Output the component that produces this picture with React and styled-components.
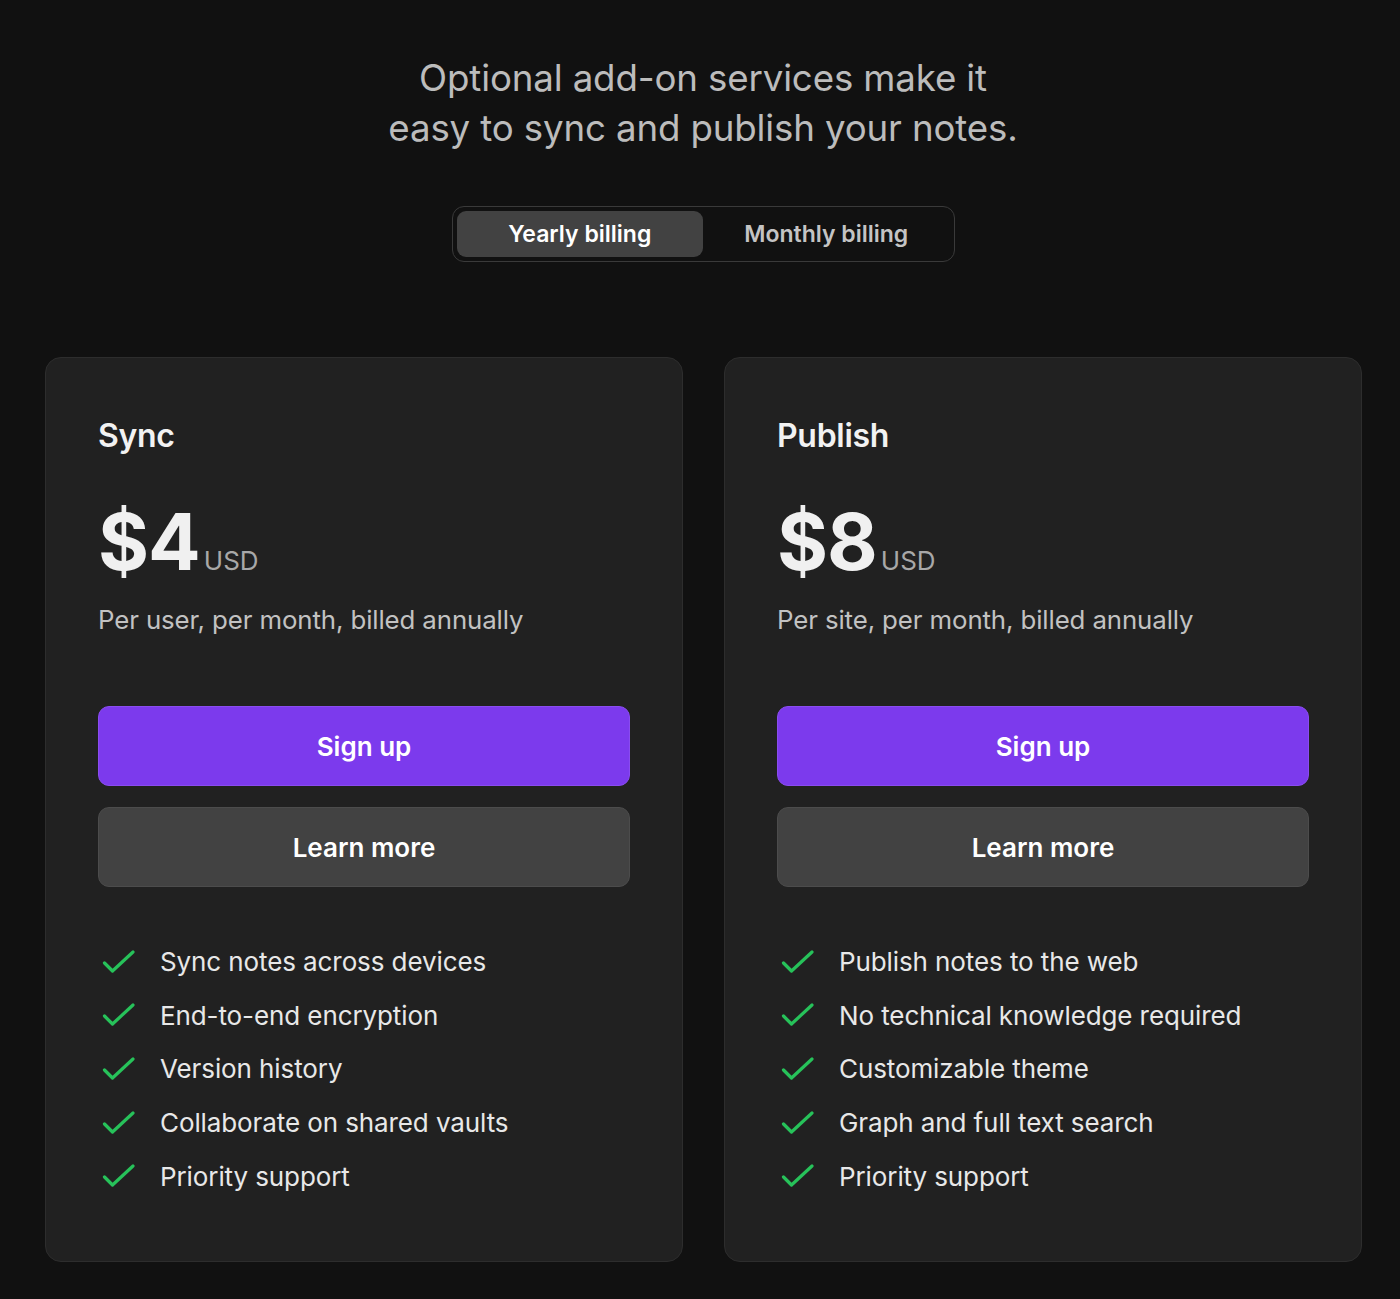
import React, { useState } from 'react';
import styled, { createGlobalStyle } from 'styled-components';

const GlobalStyle = createGlobalStyle`
  html, body {
    margin: 0;
    padding: 0;
    background: #111111;
  }
  body {
    font-family: Inter, 'Noto Sans', 'Liberation Sans', sans-serif;
    -webkit-font-smoothing: antialiased;
  }
`;

// --- Styled Components ---

const Page = styled.div`
  min-height: 1299px;
  background: #111111;
  padding: 53px 39px 37px 45px;
  box-sizing: border-box;
  display: flex;
  flex-direction: column;
  align-items: center;
`;

const Headline = styled.h1`
  margin: 0;
  font-size: 36.7px;
  line-height: 50px;
  font-weight: 400;
  color: #bcbcbc;
  text-align: center;
  letter-spacing: -0.15px;
`;

const Toggle = styled.div`
  margin-top: 53px;
  display: flex;
  padding: 4px;
  border: 1.5px solid #3a3a3a;
  border-radius: 12px;
  width: 503px;
  height: 56px;
  box-sizing: border-box;
`;

const ToggleButton = styled.button`
  flex: 1;
  border: none;
  border-radius: 9px;
  background: ${(p) => (p.$active ? '#424242' : 'transparent')};
  color: ${(p) => (p.$active ? '#ffffff' : '#c4c4c4')};
  font-family: inherit;
  font-size: 23px;
  font-weight: 600;
  cursor: pointer;
`;

const Cards = styled.div`
  margin-top: 95px;
  width: 100%;
  display: grid;
  grid-template-columns: 638px 638px;
  gap: 41px;
`;

const Card = styled.div`
  background: #212121;
  border: 1.5px solid #2d2d2d;
  border-radius: 16px;
  padding: 58px 52px 58px 52px;
  box-sizing: border-box;
  display: flex;
  flex-direction: column;
`;

const PlanName = styled.h2`
  margin: 0;
  font-size: 32px;
  line-height: 40px;
  font-weight: 600;
  color: #f2f2f2;
  letter-spacing: -0.3px;
`;

const PriceRow = styled.div`
  margin-top: 38px;
  display: flex;
  align-items: baseline;
  gap: 4px;
`;

const Amount = styled.span`
  font-size: 78px;
  line-height: 96px;
  font-weight: 700;
  color: #f0f0f0;
  letter-spacing: -1px;
`;

const Currency = styled.span`
  font-size: 26px;
  color: #a8a8a8;
  font-weight: 400;
`;

const Billing = styled.p`
  margin: 13px 0 0 0;
  font-size: 25.8px;
  line-height: 34px;
  color: #c2c2c2;
  letter-spacing: -0.1px;
`;

const Actions = styled.div`
  margin-top: 69px;
  display: flex;
  flex-direction: column;
  gap: 21px;
`;

const ActionButton = styled.button`
  height: 80px;
  width: 100%;
  border-radius: 11px;
  border: 1.5px solid ${(p) => (p.$primary ? '#8a4cf0' : '#4c4c4c')};
  background: ${(p) => (p.$primary ? '#7c3aed' : '#424242')};
  color: #ffffff;
  font-family: inherit;
  font-size: 26px;
  font-weight: 600;
  cursor: pointer;

  &:hover {
    opacity: 0.92;
  }
`;

const Features = styled.ul`
  list-style: none;
  margin: 48px 0 0 0;
  padding: 0;
  display: flex;
  flex-direction: column;
`;

const Feature = styled.li`
  display: flex;
  align-items: center;
  gap: 25px;
  height: 53.6px;
  font-size: 26px;
  color: #e8e8e8;
  letter-spacing: -0.1px;
`;

const CheckIcon = styled.svg`
  flex: none;
  width: 33px;
  height: 26px;
  margin-left: 4px;
`;

const Check = () => (
  <CheckIcon viewBox="0 0 33 26" fill="none">
    <polyline
      points="2.5,14 10.5,22 31,3"
      stroke="#27c25a"
      strokeWidth="3.2"
      strokeLinecap="round"
      strokeLinejoin="round"
    />
  </CheckIcon>
);

const plans = [
  {
    name: 'Sync',
    price: '$4',
    billing: 'Per user, per month, billed annually',
    features: [
      'Sync notes across devices',
      'End-to-end encryption',
      'Version history',
      'Collaborate on shared vaults',
      'Priority support',
    ],
  },
  {
    name: 'Publish',
    price: '$8',
    billing: 'Per site, per month, billed annually',
    features: [
      'Publish notes to the web',
      'No technical knowledge required',
      'Customizable theme',
      'Graph and full text search',
      'Priority support',
    ],
  },
];

const App = () => {
  const [yearly, setYearly] = useState(true);

  return (
    <Page>
      <GlobalStyle />
      <Headline>
        Optional add-on services make it
        <br />
        easy to sync and publish your notes.
      </Headline>

      <Toggle>
        <ToggleButton $active={yearly} onClick={() => setYearly(true)}>
          Yearly billing
        </ToggleButton>
        <ToggleButton $active={!yearly} onClick={() => setYearly(false)}>
          Monthly billing
        </ToggleButton>
      </Toggle>

      <Cards>
        {plans.map((plan) => (
          <Card key={plan.name}>
            <PlanName>{plan.name}</PlanName>
            <PriceRow>
              <Amount>{plan.price}</Amount>
              <Currency>USD</Currency>
            </PriceRow>
            <Billing>{plan.billing}</Billing>
            <Actions>
              <ActionButton $primary>Sign up</ActionButton>
              <ActionButton>Learn more</ActionButton>
            </Actions>
            <Features>
              {plan.features.map((f) => (
                <Feature key={f}>
                  <Check />
                  {f}
                </Feature>
              ))}
            </Features>
          </Card>
        ))}
      </Cards>
    </Page>
  );
};

export default App;
